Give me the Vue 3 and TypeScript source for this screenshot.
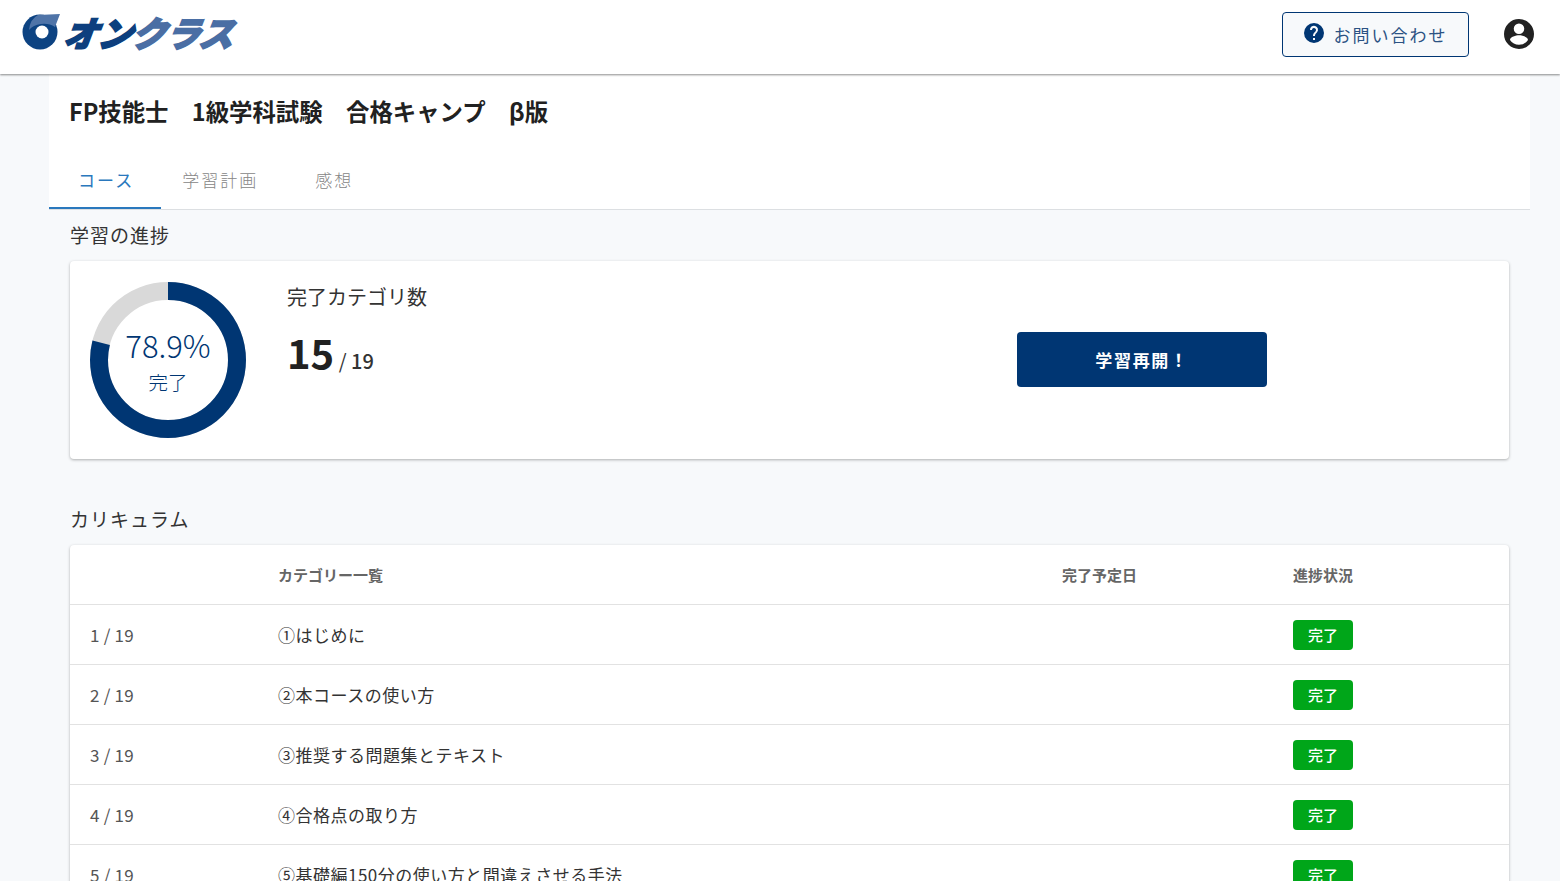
<script setup lang="ts">
interface Row { no: string; title: string }
const rows: Row[] = [
  { no: '1 / 19', title: '①はじめに' },
  { no: '2 / 19', title: '②本コースの使い方' },
  { no: '3 / 19', title: '③推奨する問題集とテキスト' },
  { no: '4 / 19', title: '④合格点の取り方' },
  { no: '5 / 19', title: '⑤基礎編150分の使い方と間違えさせる手法' },
]
const tabs = ['コース', '学習計画', '感想']
const r = 69
const c = 2 * Math.PI * r
const dash = `${c * 0.789} ${c}`
</script>

<template>
  <div class="page">
    <header class="topbar">
      <div class="logo">
        <svg class="mark" width="38" height="36" viewBox="0 0 38 36">
          <circle cx="18" cy="18" r="17.5" fill="#0d4382" />
          <path d="M16 1 L38 0 L33 13 Q27 9 19 10 Q11 11 7 16 Q8 5 16 1Z" fill="#4f74a8" />
          <circle cx="20" cy="18" r="6.5" fill="#fff" />
        </svg>
        <span class="logo-text"><span class="dark">オン</span><span class="light">クラス</span><i class="logo-dot"></i></span>
      </div>
      <div class="top-actions">
        <button class="contact">
          <svg width="24" height="24" viewBox="0 0 24 24"><path fill="#003673" d="M12 2a10 10 0 1 0 0 20 10 10 0 0 0 0-20Zm1 17h-2v-2h2v2Zm2.07-7.75-.9.92C13.45 12.9 13 13.5 13 15h-2v-.5c0-1.1.45-2.1 1.17-2.83l1.24-1.26A2 2 0 1 0 10 9H8a4 4 0 1 1 7.07 2.25Z"/></svg>
          <span>お問い合わせ</span>
        </button>
        <svg class="avatar" width="36" height="36" viewBox="0 0 24 24"><path fill="#212121" d="M12 2a10 10 0 1 0 0 20 10 10 0 0 0 0-20Zm0 3a3.5 3.5 0 1 1 0 7 3.5 3.5 0 0 1 0-7Zm0 14.2a7.2 7.2 0 0 1-6-3.22c.03-1.99 4-3.08 6-3.08s5.97 1.09 6 3.08a7.2 7.2 0 0 1-6 3.22Z"/></svg>
      </div>
    </header>

    <main class="container">
      <section class="course-head">
        <h1 class="course-title">FP技能士　1級学科試験　合格キャンプ　β版</h1>
        <nav class="tabs">
          <a v-for="(t, i) in tabs" :key="t" class="tab" :class="{ active: i === 0 }">{{ t }}</a>
        </nav>
      </section>

      <section class="body">
        <h2 class="section-title">学習の進捗</h2>
        <div class="card progress-card">
          <div class="ring">
            <svg width="156" height="156" viewBox="0 0 156 156">
              <circle cx="78" cy="78" :r="r" fill="none" stroke="#d9d9d9" stroke-width="18" />
              <circle cx="78" cy="78" :r="r" fill="none" stroke="#003673" stroke-width="18" :stroke-dasharray="dash" transform="rotate(-90 78 78)" />
            </svg>
            <div class="ring-label">
              <div class="pct">78.9%</div>
              <div class="done">完了</div>
            </div>
          </div>
          <div class="count">
            <div class="count-label">完了カテゴリ数</div>
            <div class="count-value"><b>15</b><span class="slash"> / </span><span class="total">19</span></div>
          </div>
          <div class="resume-wrap">
            <button class="resume">学習再開！</button>
          </div>
        </div>

        <h2 class="section-title curriculum">カリキュラム</h2>
        <div class="card table-card">
          <div class="row head">
            <div></div>
            <div>カテゴリー一覧</div>
            <div>完了予定日</div>
            <div>進捗状況</div>
          </div>
          <div v-for="row in rows" :key="row.no" class="row item">
            <div class="no">{{ row.no }}</div>
            <div class="name">{{ row.title }}</div>
            <div></div>
            <div><span class="badge">完了</span></div>
          </div>
        </div>
      </section>
    </main>
  </div>
</template>

<style>
html, body { margin: 0; height: 100%; overflow: hidden; background: #f7f9fb; }
</style>

<style scoped>
.page {
  height: 881px;
  overflow: hidden;
  background: #f7f9fb;
  color: #212121;
  font-family: "Noto Sans CJK JP", "Noto Sans", sans-serif;
}
.topbar {
  position: relative;
  z-index: 2;
  height: 74px;
  box-sizing: border-box;
  background: #fff;
  box-shadow: 0 1px 2px rgba(0, 0, 0, 0.45);
  display: flex;
  align-items: center;
  justify-content: space-between;
  padding: 0 23px 0 22px;
}
.logo { display: flex; align-items: center; gap: 4px; height: 36px; margin-top: -11px; }
.mark { flex: none; }
.logo-text {
  position: relative;
  font-size: 35px;
  line-height: 36px;
  font-weight: 900;
  font-style: italic;
  letter-spacing: -1px;
  white-space: nowrap;
  display: inline-block;
  transform: skewX(-8deg);
  -webkit-text-stroke: 1.6px currentColor;
}
.logo-dot {
  position: absolute;
  left: 55px;
  top: 3px;
  width: 5px;
  height: 5px;
  border-radius: 50%;
  background: #fff;
}
.dark { color: #0d3f7e; }
.light { color: #4a6ea4; }
.top-actions { display: flex; align-items: center; gap: 32px; margin-top: -6px; }
.contact {
  width: 187px;
  height: 45px;
  box-sizing: border-box;
  display: flex;
  align-items: center;
  justify-content: center;
  gap: 8px;
  background: #f7f9fb;
  border: 1px solid #003673;
  border-radius: 4px;
  color: #2b5283;
  font: 400 17px "Noto Sans CJK JP", sans-serif;
  letter-spacing: 2px;
  padding: 0;
}
.contact svg { margin-top: -3px; margin-left: -2px; }
.avatar { margin-top: -1px; }
.container { width: 1481px; margin-left: 49px; }
.course-head { background: #fff; height: 135px; border-bottom: 1px solid #dcdfe2; position: relative; }
.course-title {
  margin: 0;
  padding: 19px 0 0 20px;
  font-size: 23.4px;
  line-height: 36px;
  font-weight: 700;
  color: #212121;
  height: 55px;
  white-space: nowrap;
}
.tabs { display: flex; position: absolute; left: 0; bottom: 0; height: 57px; }
.tab {
  padding: 0 27px 1px 29px;
  display: flex;
  align-items: center;
  font-size: 17px;
  letter-spacing: 2px;
  color: #858585;
  border-bottom: 2px solid transparent;
  box-sizing: border-box;
  font-weight: 300;
}
.tab:nth-child(2) { padding: 0 30px 1px 21px; }
.tab:nth-child(3) { padding: 0 29px 1px 27px; }
.tab.active { color: #2a78bd; border-bottom-color: #2a78bd; font-weight: 400; }
.body { padding: 0 21px; }
.section-title {
  margin: 0;
  height: 51px;
  line-height: 50px;
  font-size: 19px;
  font-weight: 400;
  letter-spacing: 1px;
  color: #333;
  box-sizing: border-box;
}
.curriculum { margin-top: 36px; height: 50px; line-height: 48px; }
.card {
  background: #fff;
  border-radius: 4px;
  box-shadow: 0 1px 3px rgba(0, 0, 0, 0.3);
}
.progress-card {
  height: 198px;
  display: flex;
  align-items: center;
  padding-left: 20px;
  box-sizing: border-box;
}
.ring { position: relative; width: 156px; height: 156px; flex: none; }
.ring svg { display: block; }
.ring-label {
  position: absolute;
  inset: 0;
  text-align: center;
  color: #003673;
}
.pct { font-size: 31px; line-height: 40px; margin-top: 43px; font-weight: 300; }
.done { font-size: 19.5px; line-height: 26px; margin-top: 4px; font-weight: 300; }
.count { margin-left: 41px; width: 730px; align-self: flex-start; padding-top: 21px; box-sizing: border-box; flex: none; }
.count-label { font-size: 20px; line-height: 30px; font-weight: 400; color: #333; }
.count-value { margin-top: 12px; line-height: 56px; height: 56px; white-space: nowrap; }
.count-value b { font-size: 40px; font-weight: 700; color: #212121; }
.slash { font-size: 20px; color: #333; }
.total { font-size: 20px; font-weight: 500; color: #333; }
.resume-wrap { flex: none; margin-top: -2px; }
.resume {
  width: 250px;
  height: 55px;
  border: none;
  border-radius: 4px;
  background: #003673;
  color: #fff;
  font: 700 17px "Noto Sans CJK JP", sans-serif;
  letter-spacing: 1.7px;
  display: block;
}
.row {
  display: grid;
  grid-template-columns: 187px 784px 231px 1fr;
  align-items: center;
  padding-left: 21px;
  height: 60px;
  box-sizing: border-box;
  border-bottom: 1px solid #e2e2e2;
}
.head {
  font-size: 15px;
  font-weight: 700;
  color: #666;
}
.item { font-size: 17px; color: #333; font-weight: 400; letter-spacing: 0.5px; }
.no { color: #555; letter-spacing: 0.2px; margin-left: -1px; }
.badge {
  display: inline-flex;
  align-items: center;
  justify-content: center;
  width: 60px;
  height: 30px;
  box-sizing: border-box;
  padding-bottom: 1px;
  border-radius: 4px;
  background: #00a619;
  color: #fff;
  font-size: 15px;
  letter-spacing: 0;
  font-weight: 500;
  vertical-align: middle;
}
</style>
